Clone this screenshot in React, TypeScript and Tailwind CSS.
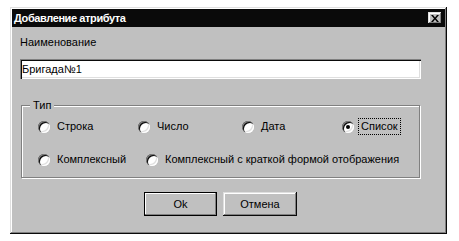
import { useState } from 'react'

/* ─── Classic 3D bevels ─── */
const RAISED = 'shadow-[inset_-1px_-1px_#0a0a0a,inset_1px_1px_#dfdfdf,inset_-2px_-2px_#808080,inset_2px_2px_#fff]'
const SUNKEN = 'shadow-[inset_1px_1px_#808080,inset_2px_2px_#0a0a0a,inset_-1px_-1px_#fff,inset_-2px_-2px_#dfdfdf]'

const ROW_1 = [
  { id: 'str', label: 'Строка', w: 'w-[100px]' },
  { id: 'num', label: 'Число', w: 'w-[104px]' },
  { id: 'date', label: 'Дата', w: 'w-[100px]' },
  { id: 'list', label: 'Список', w: 'w-auto' },
]

const ROW_2 = [
  { id: 'cx', label: 'Комплексный', w: 'w-[108px]' },
  { id: 'cxs', label: 'Комплексный с краткой формой отображения', w: 'w-auto' },
]

function Radio({ label, checked, focused, onClick, w }: { label: string; checked: boolean; focused?: boolean; onClick: () => void; w: string }) {
  return (
    <button onClick={onClick} className={`flex items-center gap-[4px] whitespace-nowrap shrink-0 ${w}`}>
      <span className={`w-[12px] h-[12px] rounded-full bg-white flex items-center justify-center ${SUNKEN}`}>
        {checked && <span className="w-[4px] h-[4px] rounded-full bg-black" />}
      </span>
      <span className={`leading-[15px] px-[2px] border border-dotted ${focused ? 'border-black' : 'border-transparent'}`}>{label}</span>
    </button>
  )
}

export default function App() {
  const [kind, setKind] = useState('list')
  const [name, setName] = useState('Бригада№1')

  return (
    <div className="w-[459px] h-[241px] bg-white pt-[7px] pl-[10px] text-[11px] text-black" style={{ fontFamily: '"Liberation Sans", Arial, sans-serif' }}>
      <div className={`w-[437px] h-[227px] bg-[#c0c0c0] p-[2px] flex flex-col ${RAISED}`}>
        {/* Title bar */}
        <div className="h-[18px] bg-[#0a0a0a] flex items-center justify-between pl-[2px] pr-[3px]">
          <span className="text-white font-bold text-[11px] tracking-[-0.4px]">Добавление атрибута</span>
          <button className={`w-[14px] h-[12px] bg-[#c0c0c0] flex items-center justify-center ${RAISED}`}>
            <svg width="8" height="7" viewBox="0 0 8 7">
              <path d="M0 0h2l2 2.5L6 0h2L5 3.5 8 7H6L4 4.5 2 7H0l3-3.5z" fill="#000" />
            </svg>
          </button>
        </div>

        {/* Body */}
        <div className="flex flex-col pl-[8px] pr-[24px]">
          <label className="mt-[8px] leading-[14px] h-[14px]">Наименование</label>

          <div className={`mt-[10px] h-[20px] bg-white flex items-center pl-[2px] ${SUNKEN}`}>
            <input value={name} onChange={(e) => setName(e.target.value)} className="w-full bg-transparent outline-none leading-[14px]" />
          </div>

          <fieldset className="mt-[20px] mx-[1px] h-[79px] border border-[#808080] shadow-[1px_1px_0_#fff,inset_1px_1px_0_#fff] px-0">
            <legend className="ml-[8px] px-[3px] bg-[#c0c0c0] leading-[12px]">Тип</legend>
            <div className="flex mt-[7px] pl-[16px]">
              {ROW_1.map((r) => (
                <Radio key={r.id} label={r.label} w={r.w} checked={kind === r.id} focused={kind === r.id} onClick={() => setKind(r.id)} />
              ))}
            </div>
            <div className="flex mt-[16px] pl-[16px]">
              {ROW_2.map((r) => (
                <Radio key={r.id} label={r.label} w={r.w} checked={kind === r.id} focused={kind === r.id} onClick={() => setKind(r.id)} />
              ))}
            </div>
          </fieldset>

          {/* Buttons */}
          <div className="mt-[14px] flex justify-center gap-[6px]">
            <button className="w-[73px] h-[24px] border border-black bg-[#c0c0c0] shadow-[inset_-1px_-1px_#808080,inset_1px_1px_#fff]">Ok</button>
            <button className={`w-[74px] h-[24px] bg-[#c0c0c0] ${RAISED}`}>Отмена</button>
          </div>
        </div>
      </div>
    </div>
  )
}
